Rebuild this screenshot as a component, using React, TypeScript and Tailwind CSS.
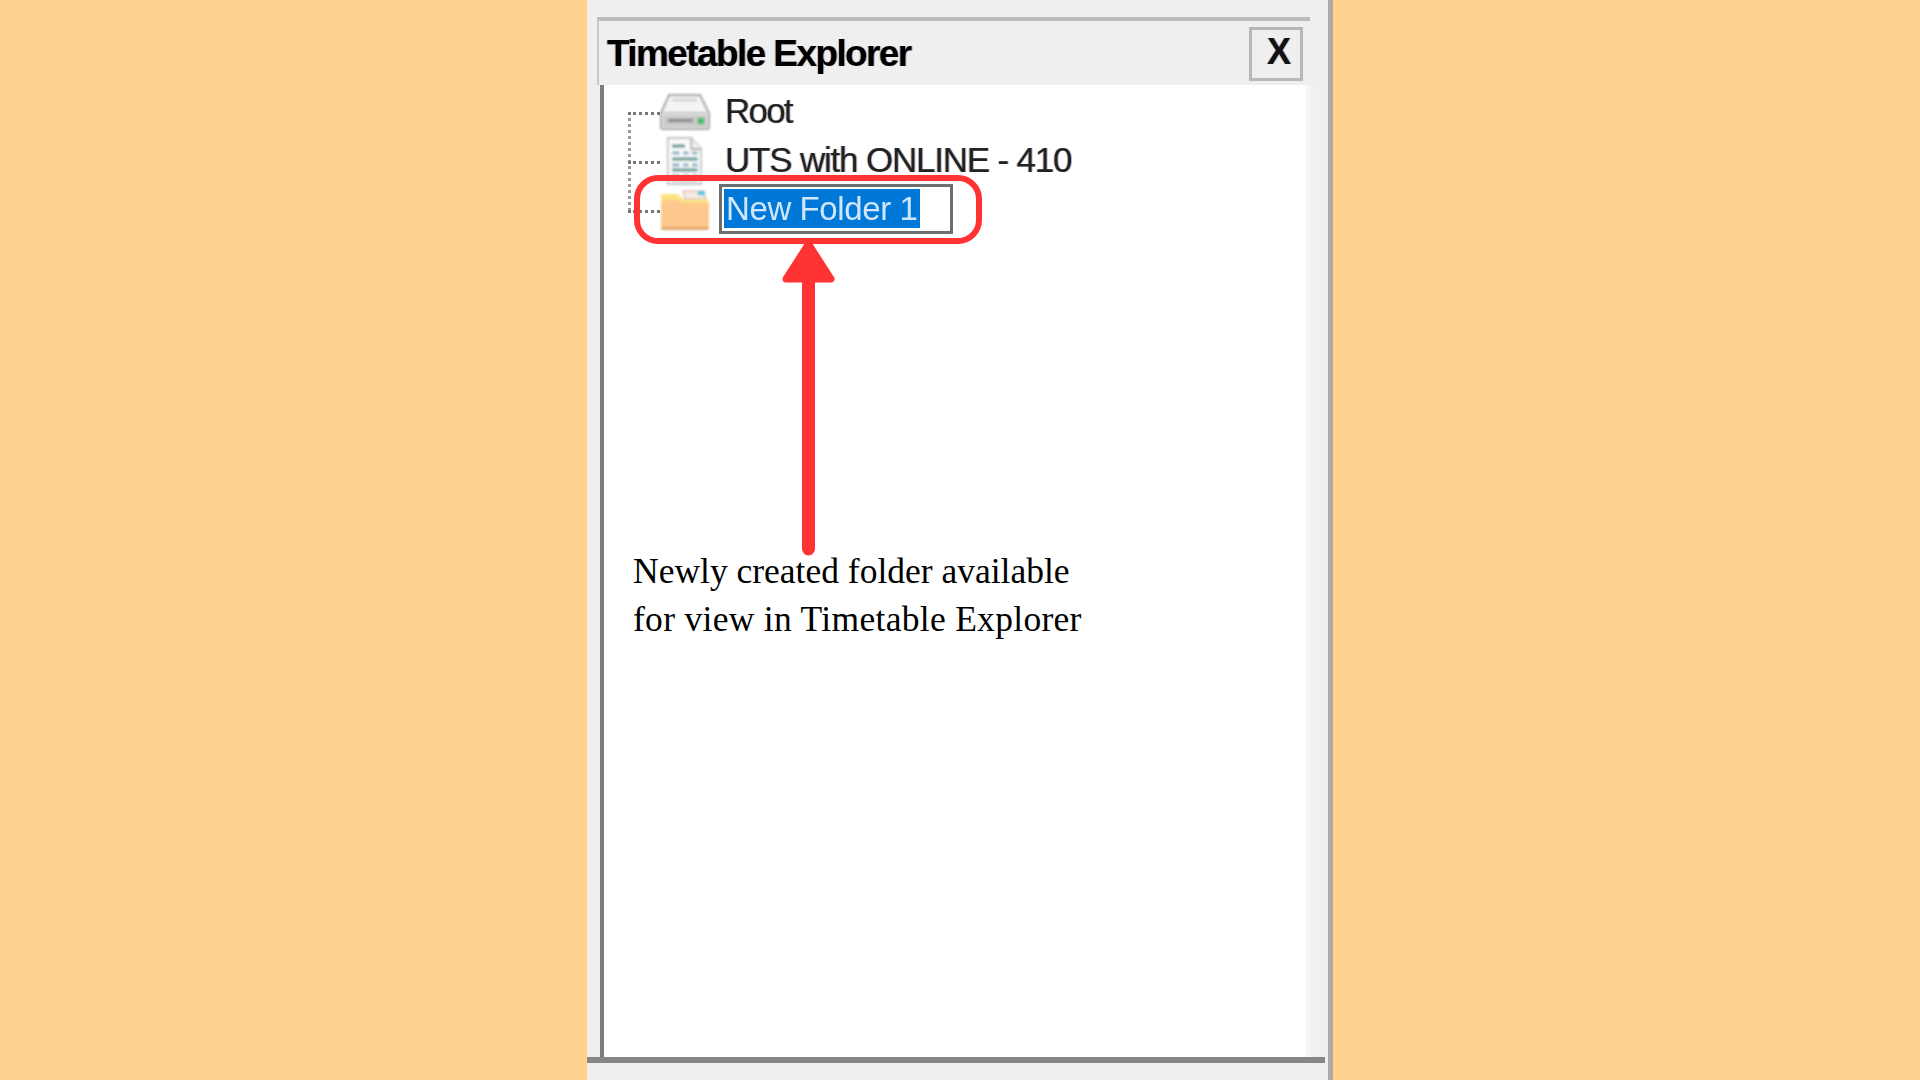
const sans = "font-['Liberation_Sans',Arial,sans-serif]";
// cleartype-ish colour fringe seen on the screenshot text
const fringe = "[text-shadow:1px_0_0_rgba(0,70,170,0.35),-1px_0_0_rgba(170,80,0,0.35)]";

function DriveIcon() {
  return (
    <svg width="52" height="38" viewBox="0 0 52 38" className="blur-[0.8px]">
      <path d="M10 2h31l9 18v14a2 2 0 0 1-2 2H4a2 2 0 0 1-2-2V20z" fill="#f4f4f4" stroke="#a9a9a9" strokeWidth="2" />
      <path d="M4 20h44" stroke="#c4c4c4" strokeWidth="2" />
      <path d="M13 7h25" stroke="#d6d6d6" strokeWidth="3" />
      <rect x="4" y="22" width="44" height="12" fill="#c9c9c9" />
      <rect x="9" y="26" width="25" height="3" fill="#8d8d8d" />
      <rect x="39" y="25" width="6" height="6" fill="#45c267" />
    </svg>
  );
}

function DocIcon() {
  return (
    <svg width="38" height="48" viewBox="0 0 42 48" preserveAspectRatio="none" className="blur-[0.8px]">
      <path d="M3 1h26l11 11v35H3z" fill="#fafafa" stroke="#c6c6c6" strokeWidth="2" />
      <path d="M29 1v11h11" fill="#efefef" stroke="#b5b5b5" strokeWidth="2" />
      <path d="M8 9h14M8 22h28M8 33h28" stroke="#6f9c95" strokeWidth="3" />
      <path d="M8 16h8M20 16h6M8 28h8M20 28h6M30 28h6M8 39h8M20 39h6M30 39h6M30 16h6" stroke="#93b4c9" strokeWidth="3" />
      <path d="M8 44h28" stroke="#c9d5da" strokeWidth="2" />
    </svg>
  );
}

function FolderIcon() {
  return (
    <svg width="52" height="42" viewBox="0 0 52 42" className="blur-[0.8px]">
      <path d="M24 3h20l3 8H26z" fill="#f6ece4" stroke="#e3c4b5" strokeWidth="1.5" />
      <rect x="39" y="3" width="7" height="4" fill="#62c4da" />
      <path d="M2 8a2 2 0 0 1 2-2h14l7 6h23a2 2 0 0 1 2 2v25a2 2 0 0 1-2 2H4a2 2 0 0 1-2-2z" fill="#fdc88e" />
      <path d="M2 16V8a2 2 0 0 1 2-2h14l7 6h25v3H24l-6-3H5z" fill="#fbe57e" />
      <path d="M2 39h48v1a2 2 0 0 1-2 2H4a2 2 0 0 1-2-2z" fill="#dfa870" />
    </svg>
  );
}

function Arrow() {
  return (
    <svg width="55" height="318" viewBox="0 0 55 318">
      <path d="M27.5 4 L50 39 H5 Z" fill="#ff3333" stroke="#ff3333" strokeWidth="7" strokeLinejoin="round" />
      <path d="M27.5 30 V309" stroke="#ff3333" strokeWidth="13" strokeLinecap="round" />
    </svg>
  );
}

export default function App() {
  return (
    <div className="flex h-[1080px] w-full overflow-hidden bg-[#ffd28f]">
      <div className="w-[587px] shrink-0" />

      <div className="flex h-full w-[746px] shrink-0 flex-col border-r-[5px] border-[#ababab] bg-[#efefef] pt-[17px]">
        {/* header */}
        <div className="ml-[10px] mr-[18px] h-[68px] border-l-2 border-t-[4px] border-[#bdbdbd] border-l-[#c9c9c9]">
          <div className="flex h-full items-start justify-between pr-[7px]">
            <span className={`${sans} ${fringe} mt-[9px] ml-[8px] text-[37px] leading-[48px] font-bold tracking-[-1.6px] text-black blur-[0.7px]`}>
              Timetable Explorer
            </span>
            <button className="mt-[6px] flex h-[54px] w-[54px] justify-end border-[3px] border-[#b7b7b7] pr-[9px] blur-[0.4px]">
              <span className={`${sans} ${fringe} mt-[-2px] text-[36px] leading-[48px] font-bold text-[#111]`}>X</span>
            </button>
          </div>
        </div>

        {/* tree */}
        <div className="relative ml-[13px] mr-[4px] flex flex-1 border-l-[4px] border-[#7d7d7d] bg-white">
          <div className="flex flex-1 flex-col pt-[2px] pl-[55px]">
            <div className="flex h-[49px] items-center">
              <div className="flex w-[66px] justify-start"><DriveIcon /></div>
              <span className={`${sans} ${fringe} text-[35px] tracking-[-1.8px] text-[#222] blur-[0.6px]`}>Root</span>
            </div>
            <div className="flex h-[49px] items-center">
              <div className="flex w-[66px] justify-start pl-[6px]"><DocIcon /></div>
              <span className={`${sans} ${fringe} text-[35px] tracking-[-1.2px] text-[#222] blur-[0.6px]`}>UTS with ONLINE - 410</span>
            </div>
            <div className="-mt-[1px] flex h-[49px] items-center">
              <div className="flex w-[60px] justify-start"><FolderIcon /></div>
              <div className="flex h-[50px] w-[234px] shrink-0 items-center border-[3px] border-[#6e6e6e] px-[2px] blur-[0.6px]">
                <span className={`${sans} w-[196px] bg-[#0078d7] px-[2px] text-[33px] leading-[39px] tracking-[-0.4px] whitespace-nowrap text-[#cfe6fb]`}>New Folder 1</span>
              </div>
            </div>
          </div>

          {/* faint strip at the right edge */}
          <div className="w-[5px] bg-[#f6f6f6]" />
          <div className="w-[13px] bg-[#f0f0f0]" />

          {/* dotted connectors */}
          <div className="absolute left-[24px] top-[27px] h-[99px] border-l-[3px] border-dotted border-[#9a9a9a] blur-[0.4px]" />
          <div className="absolute left-[24px] top-[27px] w-[32px] border-t-[3px] border-dotted border-[#777] blur-[0.4px]" />
          <div className="absolute left-[24px] top-[76px] w-[32px] border-t-[3px] border-dotted border-[#777] blur-[0.4px]" />
          <div className="absolute left-[24px] top-[125px] w-[32px] border-t-[3px] border-dotted border-[#777] blur-[0.4px]" />

          {/* annotation */}
          <div className="absolute left-[30px] top-[90px] h-[69px] w-[348px] rounded-[24px] border-[6px] border-[#ff3333]" />
          <div className="absolute left-[177px] top-[155px]"><Arrow /></div>
          <p className="absolute left-[29px] top-[462px] font-['Liberation_Serif','Times_New_Roman',serif] text-[35.5px] leading-[48px] whitespace-nowrap text-black">
            Newly created folder available
            <br />
            <span className="tracking-[0.3px]">for view in Timetable Explorer</span>
          </p>
        </div>

        <div className="mr-[3px] h-[6px] shrink-0 bg-[#868686] blur-[0.4px]" />
        <div className="h-[17px] shrink-0" />
      </div>
    </div>
  );
}
